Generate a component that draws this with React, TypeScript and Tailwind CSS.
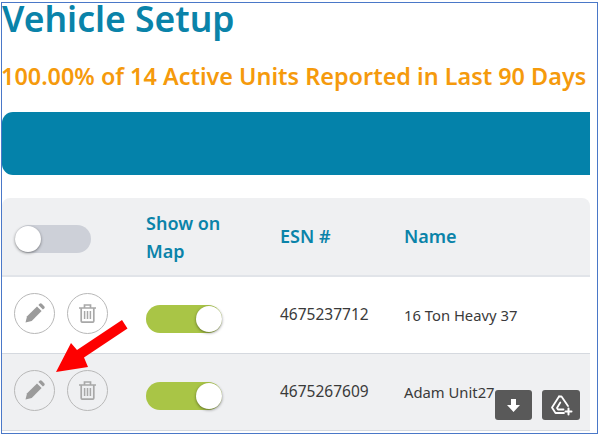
function PencilIcon() {
  return (
    <svg viewBox="0 0 20 20" className="w-5 h-5" fill="#9b9b9b">
      <path d="M0.5 19.5l1.6-6.2L12 3.4l4.6 4.6-9.9 9.900-6.2 1.6z" />
      <path d="M13.4 2l1.2-1.2c.7-.7 1.5-.7 2.2 0l2.4 2.4c.7.7.7 1.5 0 2.2L17.9 6.6 13.4 2z" />
    </svg>
  );
}

function TrashIcon() {
  return (
    <svg viewBox="0 0 17 19" className="w-[17px] h-[19px]" fill="none" stroke="#a8a8a8" strokeWidth="1.7">
      <path d="M0 4h17M5.5 4V1h6v3" />
      <path d="M2.2 4v13c0 .8.6 1.2 1.2 1.2h10.2c.6 0 1.2-.4 1.2-1.2V4" />
      <path d="M5.6 7v8M8.5 7v8M11.4 7v8" strokeWidth="1.5" />
    </svg>
  );
}

function RoundButton({ children }: { children: React.ReactNode }) {
  return (
    <div className="w-[41px] h-[41px] rounded-full border-[1.5px] border-[#b8b8b8] flex items-center justify-center">
      {children}
    </div>
  );
}

function Toggle({ on }: { on: boolean }) {
  return (
    <div className={`w-[76px] h-[28px] rounded-full flex items-center ${on ? "bg-[#a9c546] justify-end" : "bg-[#cdd0d8] justify-start"}`}>
      <div className="w-[26px] h-[26px] rounded-full bg-white shadow-[0_1px_3px_rgba(0,0,0,0.45)]" />
    </div>
  );
}

function Row({ esn, name, shaded }: { esn: string; name: string; shaded?: boolean }) {
  return (
    <div className={`h-[77px] flex items-center border-b border-[#d5d9df] ${shaded ? "bg-[#eff0f2]" : "bg-white"}`}>
      <div className="w-[144px] pl-3 pb-[4px] flex gap-3">
        <RoundButton><PencilIcon /></RoundButton>
        <RoundButton><TrashIcon /></RoundButton>
      </div>
      <div className="w-[134px] pt-2">
        <Toggle on />
      </div>
      <div className="w-[124px] text-[15.5px] text-[#3a3a3a]">{esn}</div>
      <div className="text-[14.8px] text-[#3a3a3a] whitespace-nowrap">{name}</div>
    </div>
  );
}

export default function App() {
  return (
    <div className="relative w-[603px] h-[438px] overflow-hidden bg-white font-['Noto_Sans',sans-serif]">
      <div className="ml-px mt-[2px] w-[597px] h-[432px] border border-[#4a78c8] pr-[7px]">
        <h1 className="text-[35.5px] leading-[30px] font-semibold text-[#0a83a9] whitespace-nowrap">Vehicle Setup</h1>
        <div className="mt-[30px] -ml-px text-[23.4px] leading-[26px] font-semibold text-[#f59a0c] whitespace-nowrap">
          100.00% of 14 Active Units Reported in Last 90 Days
        </div>
        <div className="mt-[23px] h-[63px] bg-[#0482aa] rounded-l-[11px]" />
        <div className="mt-[23px]">
          <div className="h-[79px] bg-[#eff0f2] rounded-t-lg flex items-center border-b-2 border-[#e1e4e9]">
            <div className="w-[144px] pl-[13px] pt-[5px]">
              <Toggle on={false} />
            </div>
            <div className="w-[134px] text-[18px] leading-[28px] font-semibold text-[#0a83a9]">
              Show on<br />Map
            </div>
            <div className="w-[124px] text-[18px] font-semibold text-[#0a83a9]">ESN #</div>
            <div className="text-[18px] font-semibold text-[#0a83a9]">Name</div>
          </div>
          <Row esn="4675237712" name="16 Ton Heavy 37" />
          <Row esn="4675267609" name="Adam Unit27" shaded />
        </div>
      </div>

      <svg viewBox="0 0 603 438" className="absolute left-0 top-0 w-[603px] h-[438px] pointer-events-none">
        <path d="M122 320L127.5 328.500L84 357.500L88 367L56 372L71 343L77 350Z" fill="#fe0000" />
      </svg>

      <div className="absolute left-[495px] top-[390px] w-[37px] h-[30px] bg-[#595959] rounded-[3px] flex items-center justify-center">
        <svg viewBox="0 0 13 13" className="w-[13px] h-[13px]" fill="#fff">
          <path d="M4 0h5v6h4L6.500 13 0 6h4z" />
        </svg>
      </div>
      <div className="absolute left-[542px] top-[390px] w-[38px] h-[30px] bg-[#595959] rounded-[3px] flex items-center justify-center">
        <svg viewBox="0 0 24 24" className="w-[24px] h-[24px]" fill="none" stroke="#fff" strokeWidth="1.8" strokeLinejoin="round" strokeLinecap="round">
          <path d="M10 3.500h2.500L19 13" />
          <path d="M10 3.500L3 14.500 6.500 20H15" />
          <path d="M11.300 9.500L8 15l1 1.500h5.500" />
          <path d="M19.500 15.500v6M16.500 18.500h6" strokeWidth="2" />
        </svg>
      </div>
    </div>
  );
}
